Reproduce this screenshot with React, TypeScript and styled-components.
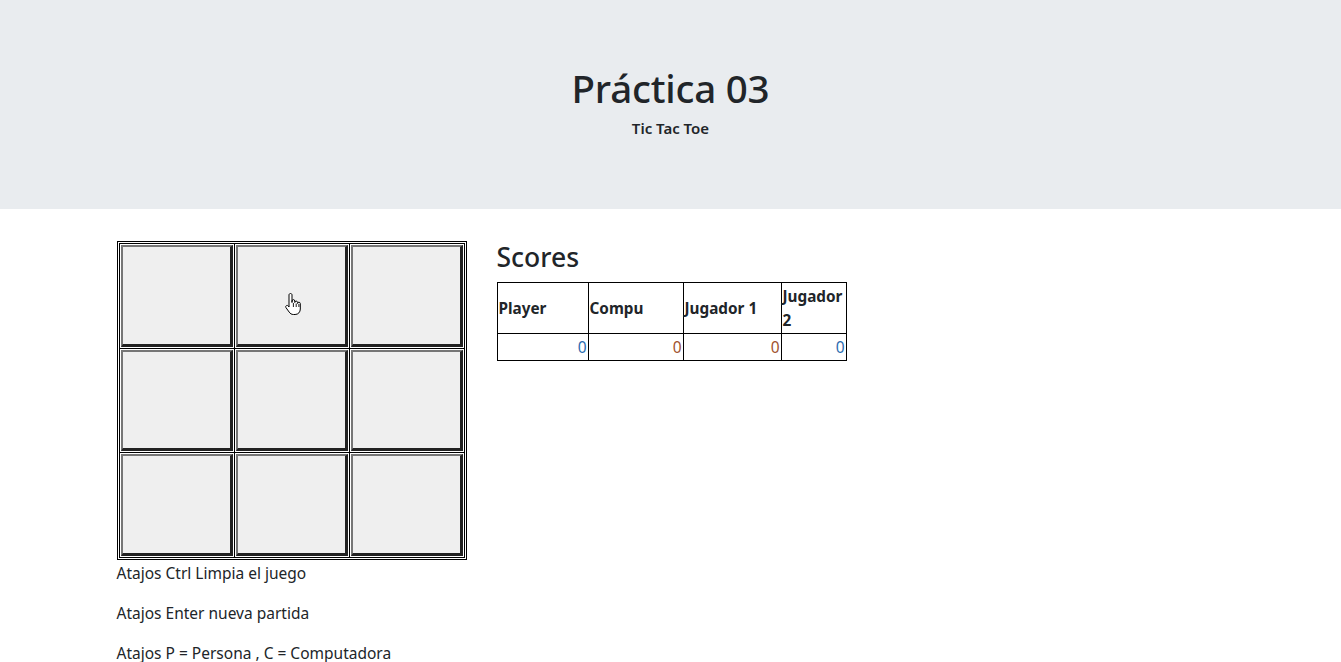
import React from "react";
import styled, { createGlobalStyle } from "styled-components";

const Global = createGlobalStyle`
  * { box-sizing: border-box; }
  body {
    margin: 0;
    background: #ffffff;
    color: #212529;
    font-family: "Noto Sans", "Open Sans", Arial, sans-serif;
    font-size: 16px;
    line-height: 1.5;
  }
`;

const Header = styled.header`
  background: #e9ecef;
  height: 209px;
  padding: 64px 32px 0;
  margin-bottom: 32px;
  text-align: center;
`;

const Title = styled.h1`
  margin: 0 0 8px;
  font-size: 38.5px;
  font-weight: 500;
  line-height: 48px;
  letter-spacing: -0.2px;
`;

const Subtitle = styled.div`
  font-size: 15px;
  font-weight: 600;
  line-height: 17px;
`;

const Container = styled.main`
  width: 1110px;
  margin: 0 auto;
  display: grid;
  grid-template-columns: 351px 350px;
  column-gap: 30px;
  align-items: start;
`;

const Column = styled.section<{ $inset?: boolean }>`
  display: flex;
  flex-direction: column;
  padding-left: ${(p) => (p.$inset ? "1px" : "0")};
`;

const Board = styled.div`
  width: 350px;
  height: 319px;
  margin-bottom: 1px;
  border: 1px solid #000;
  padding: 1px;
  display: flex;
`;

const Grid = styled.div`
  flex: 1;
  display: grid;
  grid-template-columns: repeat(3, 1fr);
  grid-template-rows: repeat(3, 1fr);
  gap: 1px;
  background: #000;
  border: 1px solid #000;
`;

const Cell = styled.div`
  background: #fff;
  padding: 1px;
  position: relative;
  display: flex;
`;

const Square = styled.button`
  flex: 1;
  display: block;
  margin: 0;
  padding: 0;
  background: #efefef;
  border-style: solid;
  border-width: 2px 3px 3px 2px;
  border-color: #767676 #222222 #222222 #767676;
  cursor: pointer;
`;

const Cursor = styled.svg`
  position: absolute;
  left: 49px;
  top: 48px;
  width: 20px;
  height: 24px;
  pointer-events: none;
`;

const Note = styled.p`
  margin: 0 0 16px;
  line-height: 24px;
  font-size: 15.5px;
`;

const Heading = styled.h3`
  margin: 0 0 8px;
  font-size: 26.5px;
  font-weight: 500;
  line-height: 33px;
`;

const Table = styled.table`
  width: 349px;
  border-collapse: collapse;
  table-layout: fixed;
`;

const Th = styled.th`
  border: 1px solid #000;
  padding: 1px;
  text-align: left;
  vertical-align: middle;
  font-size: 15.3px;
  font-weight: 700;
  line-height: 24px;
`;

const Td = styled.td<{ $tone: "blue" | "brown" }>`
  border: 1px solid #000;
  padding: 1px;
  text-align: right;
  font-size: 15.5px;
  line-height: 24px;
  color: ${(p) => (p.$tone === "blue" ? "#2b6cb0" : "#a0522d")};
`;

const cols = [
  { name: "Player", w: 91, tone: "blue" as const },
  { name: "Compu", w: 95, tone: "brown" as const },
  { name: "Jugador 1", w: 98, tone: "brown" as const },
  { name: "Jugador 2", w: 65, tone: "blue" as const },
];

function Hand() {
  return (
    <Cursor viewBox="0 0 20 24">
      <path
        d="M6.5 1.5c.9 0 1.5.6 1.5 1.5v7.5V9c0-.8.6-1.4 1.4-1.4s1.4.6 1.4 1.4v1.5c0-.8.6-1.4 1.4-1.4s1.4.6 1.4 1.4v1c0-.8.6-1.3 1.3-1.3s1.4.6 1.4 1.3v5.5c0 3-2 5.5-5.2 5.5h-1.6c-2 0-3.2-.9-4.3-2.4L2 15.7c-.5-.7-.4-1.6.3-2 .7-.5 1.5-.3 2 .3L5 15V3c0-.9.6-1.5 1.5-1.5z"
        fill="#fff"
        stroke="#000"
        strokeWidth="1"
        strokeLinejoin="round"
      />
      <path d="M9.4 11v4M12.2 11.5v3.5M14.9 12v3" stroke="#000" strokeWidth="0.9" />
    </Cursor>
  );
}

export default function App() {
  return (
    <>
      <Global />
      <Header>
        <Title>Práctica 03</Title>
        <Subtitle>Tic Tac Toe</Subtitle>
      </Header>
      <Container>
        <Column $inset>
          <Board>
            <Grid>
              {Array.from({ length: 9 }).map((_, i) => (
                <Cell key={i}>
                  <Square aria-label={`casilla ${i + 1}`} />
                  {i === 1 && <Hand />}
                </Cell>
              ))}
            </Grid>
          </Board>
          <Note>Atajos Ctrl Limpia el juego</Note>
          <Note>Atajos Enter nueva partida</Note>
          <Note>Atajos P = Persona , C = Computadora</Note>
        </Column>
        <Column>
          <Heading>Scores</Heading>
          <Table>
            <colgroup>
              {cols.map((c) => (
                <col key={c.name} style={{ width: c.w }} />
              ))}
            </colgroup>
            <thead>
              <tr>
                {cols.map((c) => (
                  <Th key={c.name}>{c.name}</Th>
                ))}
              </tr>
            </thead>
            <tbody>
              <tr>
                {cols.map((c) => (
                  <Td key={c.name} $tone={c.tone}>
                    0
                  </Td>
                ))}
              </tr>
            </tbody>
          </Table>
        </Column>
      </Container>
    </>
  );
}
